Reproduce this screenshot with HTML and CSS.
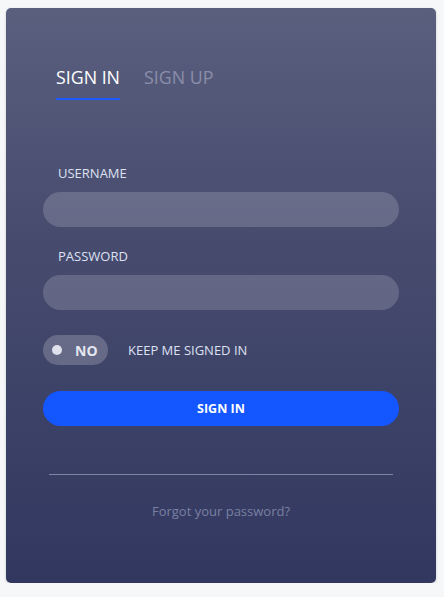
FILE: index.html
```html
<!DOCTYPE html>
<html>
<head>
<meta charset="utf-8">
<link rel="stylesheet" href="styles.css">
</head>
<body>
<div class="card">
  <div class="tabs">
    <span class="tab active">SIGN IN</span>
    <span class="tab">SIGN UP</span>
  </div>
  <form class="form">
    <label class="label">USERNAME</label>
    <div class="input"></div>
    <label class="label label-pw">PASSWORD</label>
    <div class="input"></div>
    <div class="keep">
      <div class="toggle"><span class="dot"></span><span class="no">NO</span></div>
      <span class="keep-text">KEEP ME SIGNED IN</span>
    </div>
    <div class="button">SIGN IN</div>
    <div class="rule"></div>
    <div class="forgot">Forgot your password?</div>
  </form>
</div>
</body>
</html>
```
FILE: styles.css
```css
html, body {
  margin: 0;
  padding: 0;
  background: #f6f7f9;
}
body {
  padding: 8px 0 0 6px;
  font-family: "Open Sans", "Liberation Sans", sans-serif;
}
.card {
  width: 430px;
  height: 575px;
  box-sizing: border-box;
  border-radius: 5px;
  background: linear-gradient(to bottom, #5a5f7e 0%, #474c6f 40%, #31375f 100%);
  box-shadow: 0 1px 3px rgba(0,0,0,0.18);
  padding: 57px 37px 0 37px;
}
.tabs {
  display: flex;
  gap: 24px;
  margin-left: 13px;
}
.tab {
  font-size: 17.8px;
  line-height: 24px;
  color: #8a8ea9;
  padding-bottom: 9px;
  border-bottom: 2px solid transparent;
}
.tab.active {
  color: #ffffff;
  border-bottom-color: #1a5bff;
}
.form {
  display: flex;
  flex-direction: column;
  margin-top: 65px;
}
.label {
  font-size: 13px;
  line-height: 16px;
  color: #dde1f2;
  margin-left: 15px;
  margin-bottom: 11px;
}
.label-pw {
  margin-top: 21px;
}
.input {
  height: 35px;
  border-radius: 18px;
  background: rgba(255,255,255,0.17);
}
.keep {
  display: flex;
  align-items: center;
  margin-top: 25px;
  gap: 20px;
}
.toggle {
  width: 65px;
  height: 30px;
  border-radius: 15px;
  background: rgba(255,255,255,0.2);
  display: flex;
  align-items: center;
  box-sizing: border-box;
  padding-left: 9px;
}
.dot {
  width: 10px;
  height: 10px;
  border-radius: 50%;
  background: #dfe1ec;
}
.no {
  font-weight: 700;
  font-size: 14px;
  color: #e4e6f1;
  margin-left: 13px;
}
.keep-text {
  font-size: 13px;
  color: #dde1f2;
}
.button {
  margin-top: 26px;
  height: 35px;
  border-radius: 18px;
  background: #1456ff;
  color: #ffffff;
  font-weight: 700;
  font-size: 12.5px;
  display: flex;
  align-items: center;
  justify-content: center;
}
.rule {
  margin: 48px 6px 0 6px;
  height: 1px;
  background: #7f84a2;
}
.forgot {
  margin-top: 27px;
  text-align: center;
  font-size: 13px;
  color: #7a80a2;
}
```
